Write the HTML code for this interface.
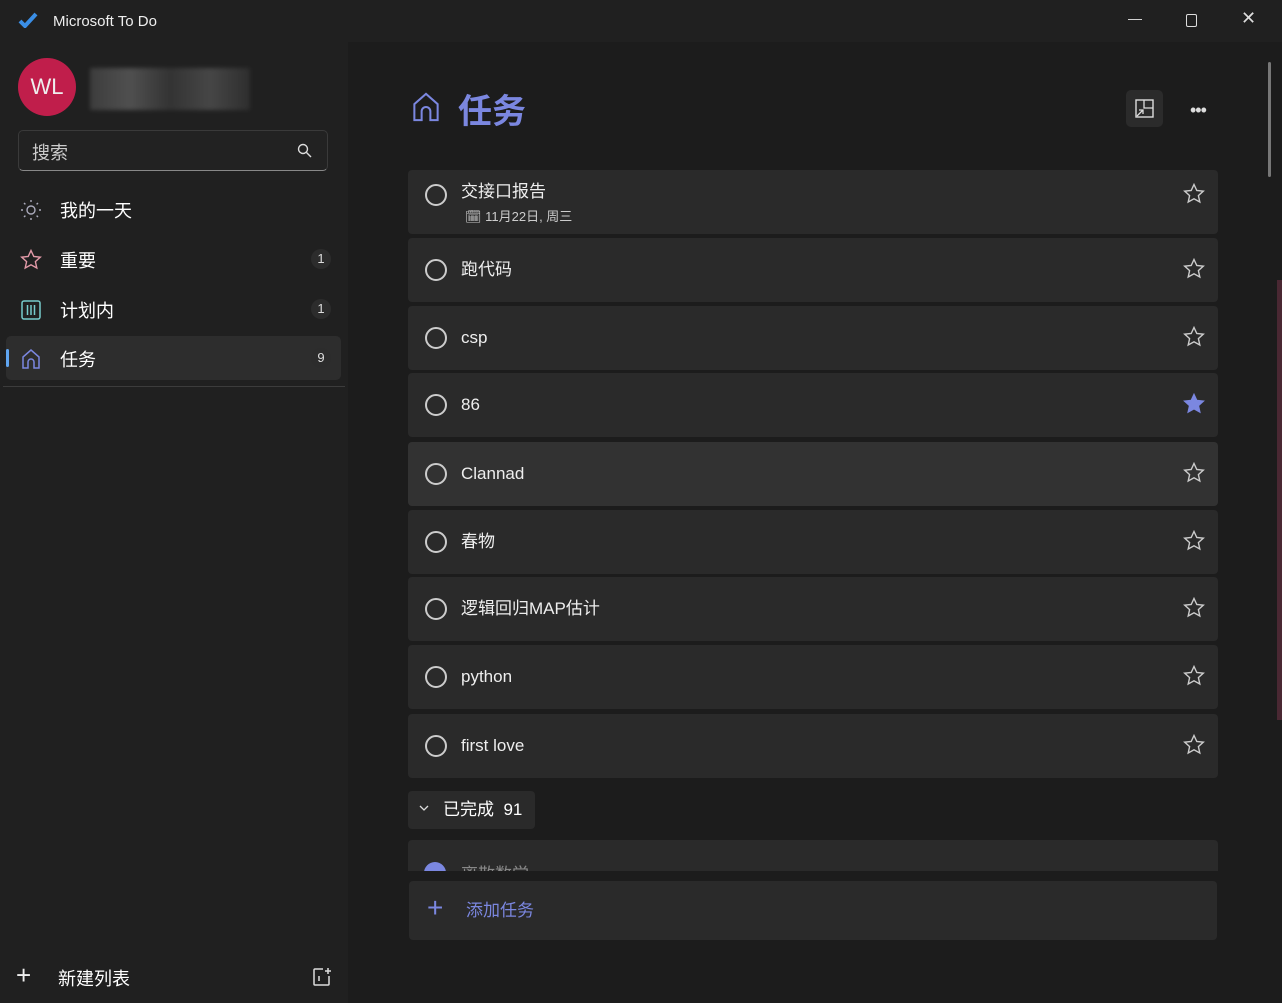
<!DOCTYPE html>
<html><head><meta charset="utf-8"><style>
*{margin:0;padding:0;box-sizing:border-box}
body{width:1282px;height:1003px;background:#1c1c1c;font-family:"Liberation Sans","Noto Sans CJK SC",sans-serif;color:#fff;position:relative;overflow:hidden}
.side{position:absolute;left:0;top:0;width:348px;height:1003px;background:#202020}
.title{position:absolute;left:53px;top:13px;font-size:15px;color:#eee}
.av{position:absolute;left:18px;top:58px;width:58px;height:58px;border-radius:50%;background:#c01e4b;font-size:22px;text-align:center;line-height:58px;color:#eee}
.blur{position:absolute;left:90px;top:68px;width:160px;height:42px;background:linear-gradient(90deg,#555,#777,#444,#666,#3a3a3a);opacity:.55;filter:blur(2px)}
.search{position:absolute;left:18px;top:130px;width:310px;height:41px;border:1px solid #3a3a3a;border-bottom-color:#888;border-radius:5px;background:#222;font-size:18px;color:#ccc;padding:8px 13px}
.nav{position:absolute;left:6px;width:335px;height:44px;border-radius:5px;font-size:18px;color:#fff}
.nav .t{position:absolute;left:54px;top:10px}
.nav .ic{position:absolute;left:14px;top:12px}
.nav .b{position:absolute;right:10px;top:12px;width:20px;height:20px;border-radius:50%;background:#2c2c2c;font-size:13px;text-align:center;line-height:20px;color:#ddd}
.main{position:absolute;left:348px;top:42px;width:920px;height:961px;background:#1c1c1c}
.topbar{position:absolute;left:348px;top:0;width:934px;height:42px;background:#202020}
.card{position:absolute;left:408px;width:810px;height:64px;background:#2a2a2a;border-radius:4px;font-size:17px}
.card .c{position:absolute;left:17px;top:21px;width:22px;height:22px;border:2px solid #ccc;border-radius:50%}
.card .t{position:absolute;left:53px;top:21px;line-height:22px;color:#eee}
.card .s{position:absolute;right:13px;top:20px}
</style></head><body>
<div class="side">
<svg style="position:absolute;left:18px;top:12px" width="20" height="16" viewBox="0 0 20 16"><path d="M2 9l5 5L18 2" stroke="#3a8ee6" stroke-width="4" fill="none"/></svg>
<div class="title">Microsoft To Do</div>
<div class="av">WL</div><div class="blur"></div>
<div class="search">搜索<svg style="position:absolute;right:14px;top:12px" width="16" height="16"><circle cx="6" cy="6" r="4.5" stroke="#ddd" stroke-width="1.4" fill="none"/><path d="M9.5 9.5L14 14" stroke="#ddd" stroke-width="1.4"/></svg></div>
<div class="nav" style="top:187px"><svg class="ic" width="22" height="22" viewBox="0 0 22 22"><circle cx="11" cy="11" r="4" stroke="#aab" fill="none" stroke-width="1.4"/><g stroke="#aab" stroke-width="1.4"><path d="M11 1v2M11 19v2M1 11h2M19 11h2M4 4l1.4 1.4M16.6 16.6L18 18M4 18l1.4-1.4M16.6 5.4L18 4"/></g></svg><span class="t">我的一天</span></div>
<div class="nav" style="top:237px"><svg class="ic" width="22" height="22" viewBox="0 0 22 22"><path d="M11 1.5l2.8 6 6.5.7-4.9 4.4 1.4 6.4L11 15.8 5.2 19l1.4-6.4L1.7 8.2l6.5-.7z" stroke="#e39aa8" stroke-width="1.4" fill="none"/></svg><span class="t">重要</span><span class="b">1</span></div>
<div class="nav" style="top:287px"><svg class="ic" width="22" height="22" viewBox="0 0 22 22"><rect x="2" y="2" width="18" height="18" rx="2" stroke="#7cc" stroke-width="1.5" fill="none"/><path d="M7.5 6v10M11 6v10M14.5 6v10" stroke="#7cc" stroke-width="1.5"/></svg><span class="t">计划内</span><span class="b">1</span></div>
<div class="nav" style="top:336px;background:#2d2d2d"><div style="position:absolute;left:0;top:13px;width:3px;height:18px;border-radius:2px;background:#60a5f0"></div><svg class="ic" width="22" height="22" viewBox="0 0 22 22"><path d="M3 20V9l8-7 8 7v11h-5v-6a3 3 0 0 0-6 0v6z" stroke="#7b87e0" stroke-width="1.5" fill="none"/></svg><span class="t">任务</span><span class="b">9</span></div>
<div style="position:absolute;left:3px;top:386px;width:342px;height:1px;background:#3c3c3c"></div>
<div style="position:absolute;left:16px;top:964px;font-size:26px;line-height:22px;color:#eee;font-weight:300">+</div>
<div style="position:absolute;left:58px;top:965px;font-size:18px">新建列表</div>
<svg style="position:absolute;left:311px;top:966px" width="22" height="22"><path d="M12 3H4a1 1 0 0 0-1 1v14a1 1 0 0 0 1 1h13a1 1 0 0 0 1-1v-8M8 10v5M17 2v6M14 5h6" stroke="#ddd" stroke-width="1.5" fill="none"/></svg>
</div>
<div class="topbar"></div>
<div style="position:absolute;left:1128px;top:10px;font-size:14px;color:#ddd">—</div>
<div style="position:absolute;left:1186px;top:14px;width:11px;height:13px;border:1.3px solid #ddd;border-radius:2px"></div>
<div style="position:absolute;left:1241px;top:8px;font-size:18px;color:#ddd">✕</div>
<div class="main"></div>
<svg style="position:absolute;left:410px;top:91px" width="32" height="32" viewBox="0 0 22 22"><path d="M3 20V9l8-7 8 7v11h-5v-6a3 3 0 0 0-6 0v6z" stroke="#7b87e0" stroke-width="1.4" fill="none"/></svg>
<div style="position:absolute;left:458px;top:84px;font-size:34px;font-weight:bold;color:#7b87e0">任务</div>
<div style="position:absolute;left:1126px;top:90px;width:37px;height:37px;border-radius:5px;background:#2b2b2b"><svg style="position:absolute;left:9px;top:9px" width="19" height="19"><rect x="1" y="1" width="17" height="17" stroke="#ddd" stroke-width="1.4" fill="none"/><path d="M9 1v8h9M2 17l6-6M4 11h4v4" stroke="#ddd" stroke-width="1.3" fill="none"/></svg></div>
<div style="position:absolute;left:1190px;top:100px;font-size:18px;color:#ddd;letter-spacing:-1px">•••</div>
<div style="position:absolute;left:1268px;top:62px;width:3px;height:115px;background:#777;border-radius:2px"></div>
<div style="position:absolute;left:1277px;top:280px;width:5px;height:440px;background:#4a2833"></div>

<div class="card" style="top:170px"><div class="c" style="top:14px"></div><div class="t" style="top:11px">交接口报告</div><div style="position:absolute;left:57px;top:36px;font-size:13px;color:#ccc">🗓︎ 11月22日, 周三</div><svg class="s" style="top:13px" width="22" height="22" viewBox="0 0 22 22"><path d="M11 1.5l2.8 6 6.5.7-4.9 4.4 1.4 6.4L11 15.8 5.2 19l1.4-6.4L1.7 8.2l6.5-.7z" stroke="#ccc" stroke-width="1.4" fill="none"/></svg></div>
<div class="card" style="top:238px"><div class="c"></div><div class="t">跑代码</div><svg class="s" width="22" height="22" viewBox="0 0 22 22"><path d="M11 1.5l2.8 6 6.5.7-4.9 4.4 1.4 6.4L11 15.8 5.2 19l1.4-6.4L1.7 8.2l6.5-.7z" stroke="#ccc" stroke-width="1.4" fill="none"/></svg></div>
<div class="card" style="top:306px"><div class="c"></div><div class="t">csp</div><svg class="s" width="22" height="22" viewBox="0 0 22 22"><path d="M11 1.5l2.8 6 6.5.7-4.9 4.4 1.4 6.4L11 15.8 5.2 19l1.4-6.4L1.7 8.2l6.5-.7z" stroke="#ccc" stroke-width="1.4" fill="none"/></svg></div>
<div class="card" style="top:373px"><div class="c"></div><div class="t">86</div><svg class="s" width="22" height="22" viewBox="0 0 22 22"><path d="M11 1.5l2.8 6 6.5.7-4.9 4.4 1.4 6.4L11 15.8 5.2 19l1.4-6.4L1.7 8.2l6.5-.7z" stroke="#7b87e0" stroke-width="1.4" fill="#7b87e0"/></svg></div>
<div class="card" style="top:442px;background:#323232"><div class="c"></div><div class="t">Clannad</div><svg class="s" width="22" height="22" viewBox="0 0 22 22"><path d="M11 1.5l2.8 6 6.5.7-4.9 4.4 1.4 6.4L11 15.8 5.2 19l1.4-6.4L1.7 8.2l6.5-.7z" stroke="#ccc" stroke-width="1.4" fill="none"/></svg></div>
<div class="card" style="top:510px"><div class="c"></div><div class="t">春物</div><svg class="s" width="22" height="22" viewBox="0 0 22 22"><path d="M11 1.5l2.8 6 6.5.7-4.9 4.4 1.4 6.4L11 15.8 5.2 19l1.4-6.4L1.7 8.2l6.5-.7z" stroke="#ccc" stroke-width="1.4" fill="none"/></svg></div>
<div class="card" style="top:577px"><div class="c"></div><div class="t">逻辑回归MAP估计</div><svg class="s" width="22" height="22" viewBox="0 0 22 22"><path d="M11 1.5l2.8 6 6.5.7-4.9 4.4 1.4 6.4L11 15.8 5.2 19l1.4-6.4L1.7 8.2l6.5-.7z" stroke="#ccc" stroke-width="1.4" fill="none"/></svg></div>
<div class="card" style="top:645px"><div class="c"></div><div class="t">python</div><svg class="s" width="22" height="22" viewBox="0 0 22 22"><path d="M11 1.5l2.8 6 6.5.7-4.9 4.4 1.4 6.4L11 15.8 5.2 19l1.4-6.4L1.7 8.2l6.5-.7z" stroke="#ccc" stroke-width="1.4" fill="none"/></svg></div>
<div class="card" style="top:714px"><div class="c"></div><div class="t">first love</div><svg class="s" width="22" height="22" viewBox="0 0 22 22"><path d="M11 1.5l2.8 6 6.5.7-4.9 4.4 1.4 6.4L11 15.8 5.2 19l1.4-6.4L1.7 8.2l6.5-.7z" stroke="#ccc" stroke-width="1.4" fill="none"/></svg></div>

<div style="position:absolute;left:408px;top:791px;width:127px;height:38px;border-radius:4px;background:#2a2a2a;font-size:17px;line-height:22px;padding:8px 0 0 35px">已完成&nbsp; 91<svg style="position:absolute;left:11px;top:14px" width="10" height="8"><path d="M1 1l4 4 4-4" stroke="#ddd" stroke-width="1.3" fill="none"/></svg></div>
<div style="position:absolute;left:408px;top:840px;width:810px;height:31px;background:#2a2a2a;border-radius:4px 4px 0 0;overflow:hidden"><div style="position:absolute;left:16px;top:22px;width:22px;height:22px;border-radius:50%;background:#7b87e0"></div><div style="position:absolute;left:53px;top:20px;font-size:17px;color:#888">离散数学</div></div>
<div style="position:absolute;left:408px;top:871px;width:810px;height:132px;background:#1c1c1c"></div>
<div style="position:absolute;left:409px;top:881px;width:808px;height:59px;background:#2a2a2a;border-radius:4px"><div style="position:absolute;left:18px;top:12px;font-size:28px;line-height:30px;color:#7b87e0;font-weight:300">+</div><div style="position:absolute;left:57px;top:19px;font-size:17px;line-height:22px;color:#7b87e0">添加任务</div></div>
</body></html>
